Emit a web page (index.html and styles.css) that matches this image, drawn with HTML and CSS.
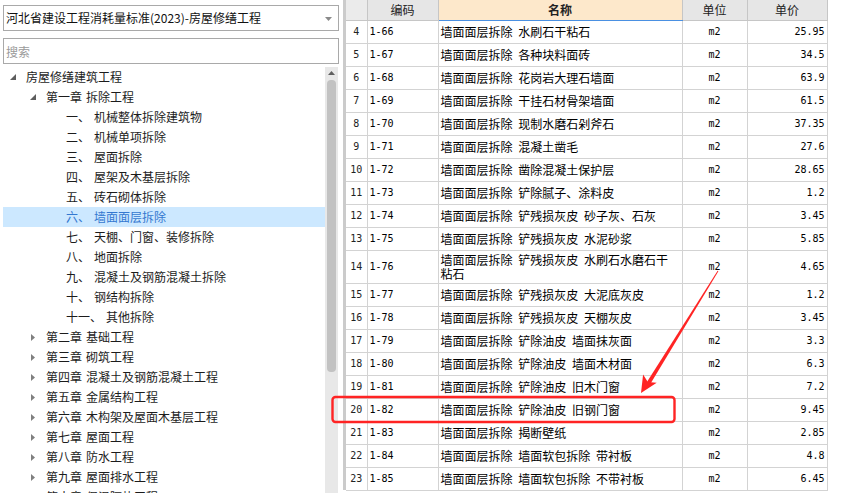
FILE: index.html
```html
<!DOCTYPE html>
<html lang="zh-CN">
<head>
<meta charset="utf-8">
<title>定额库</title>
<link rel="stylesheet" href="styles.css">
</head>
<body>
<div class="app">
  <aside class="side">
    <div class="combo">
      <span class="combo-text">河北省建设工程消耗量标准(2023)-房屋修缮工程</span>
      <svg class="combo-arrow" width="7" height="4" viewBox="0 0 7 4"><path d="M0 0H7L3.5 4Z"/></svg>
    </div>
    <div class="search"><span class="placeholder">搜索</span></div>
    <div class="tree-wrap">
      <ul class="tree">
        <li class="node l0"><span class="tog"><svg width="6" height="6" viewBox="0 0 6 6"><path d="M6 0V6H0Z"/></svg></span>房屋修缮建筑工程</li>
        <li class="node l1"><span class="tog"><svg width="6" height="6" viewBox="0 0 6 6"><path d="M6 0V6H0Z"/></svg></span><span class="ch">第一章</span>拆除工程</li>
        <li class="node l2"><span class="num">一、</span>机械整体拆除建筑物</li>
        <li class="node l2"><span class="num">二、</span>机械单项拆除</li>
        <li class="node l2"><span class="num">三、</span>屋面拆除</li>
        <li class="node l2"><span class="num">四、</span>屋架及木基层拆除</li>
        <li class="node l2"><span class="num">五、</span>砖石砌体拆除</li>
        <li class="node l2 selected"><span class="num">六、</span>墙面面层拆除</li>
        <li class="node l2"><span class="num">七、</span>天棚、门窗、装修拆除</li>
        <li class="node l2"><span class="num">八、</span>地面拆除</li>
        <li class="node l2"><span class="num">九、</span>混凝土及钢筋混凝土拆除</li>
        <li class="node l2"><span class="num">十、</span>钢结构拆除</li>
        <li class="node l2"><span class="num">十一、</span>其他拆除</li>
        <li class="node l1"><span class="tog closed"><svg width="4" height="7" viewBox="0 0 4 7"><path d="M0 0L4 3.5L0 7Z"/></svg></span><span class="ch">第二章</span>基础工程</li>
        <li class="node l1"><span class="tog closed"><svg width="4" height="7" viewBox="0 0 4 7"><path d="M0 0L4 3.5L0 7Z"/></svg></span><span class="ch">第三章</span>砌筑工程</li>
        <li class="node l1"><span class="tog closed"><svg width="4" height="7" viewBox="0 0 4 7"><path d="M0 0L4 3.5L0 7Z"/></svg></span><span class="ch">第四章</span>混凝土及钢筋混凝土工程</li>
        <li class="node l1"><span class="tog closed"><svg width="4" height="7" viewBox="0 0 4 7"><path d="M0 0L4 3.5L0 7Z"/></svg></span><span class="ch">第五章</span>金属结构工程</li>
        <li class="node l1"><span class="tog closed"><svg width="4" height="7" viewBox="0 0 4 7"><path d="M0 0L4 3.5L0 7Z"/></svg></span><span class="ch">第六章</span>木构架及屋面木基层工程</li>
        <li class="node l1"><span class="tog closed"><svg width="4" height="7" viewBox="0 0 4 7"><path d="M0 0L4 3.5L0 7Z"/></svg></span><span class="ch">第七章</span>屋面工程</li>
        <li class="node l1"><span class="tog closed"><svg width="4" height="7" viewBox="0 0 4 7"><path d="M0 0L4 3.5L0 7Z"/></svg></span><span class="ch">第八章</span>防水工程</li>
        <li class="node l1"><span class="tog closed"><svg width="4" height="7" viewBox="0 0 4 7"><path d="M0 0L4 3.5L0 7Z"/></svg></span><span class="ch">第九章</span>屋面排水工程</li>
        <li class="node l1"><span class="tog closed"><svg width="4" height="7" viewBox="0 0 4 7"><path d="M0 0L4 3.5L0 7Z"/></svg></span><span class="ch">第十章</span>保温隔热工程</li>
      </ul>
      <div class="vscroll">
        <svg class="up" width="7" height="4" viewBox="0 0 7 4"><path d="M0 4H7L3.5 0Z"/></svg>
        <div class="thumb"></div>
      </div>
    </div>
  </aside>
  <main class="grid-wrap">
    <table class="grid">
      <colgroup>
        <col class="c-no"><col class="c-code"><col class="c-name"><col class="c-unit"><col class="c-price">
      </colgroup>
      <thead>
        <tr><th class="h-no"></th><th>编码</th><th class="h-name">名称</th><th>单位</th><th>单价</th></tr>
      </thead>
      <tbody>
        <tr><td class="no">4</td><td class="code">1-66</td><td class="name">墙面面层拆除 水刷石干粘石</td><td class="unit">m2</td><td class="price">25.95</td></tr>
        <tr><td class="no">5</td><td class="code">1-67</td><td class="name">墙面面层拆除 各种块料面砖</td><td class="unit">m2</td><td class="price">34.5</td></tr>
        <tr><td class="no">6</td><td class="code">1-68</td><td class="name">墙面面层拆除 花岗岩大理石墙面</td><td class="unit">m2</td><td class="price">63.9</td></tr>
        <tr><td class="no">7</td><td class="code">1-69</td><td class="name">墙面面层拆除 干挂石材骨架墙面</td><td class="unit">m2</td><td class="price">61.5</td></tr>
        <tr><td class="no">8</td><td class="code">1-70</td><td class="name">墙面面层拆除 现制水磨石剁斧石</td><td class="unit">m2</td><td class="price">37.35</td></tr>
        <tr><td class="no">9</td><td class="code">1-71</td><td class="name">墙面面层拆除 混凝土凿毛</td><td class="unit">m2</td><td class="price">27.6</td></tr>
        <tr><td class="no">10</td><td class="code">1-72</td><td class="name">墙面面层拆除 凿除混凝土保护层</td><td class="unit">m2</td><td class="price">28.65</td></tr>
        <tr><td class="no">11</td><td class="code">1-73</td><td class="name">墙面面层拆除 铲除腻子、涂料皮</td><td class="unit">m2</td><td class="price">1.2</td></tr>
        <tr><td class="no">12</td><td class="code">1-74</td><td class="name">墙面面层拆除 铲残损灰皮 砂子灰、石灰</td><td class="unit">m2</td><td class="price">3.45</td></tr>
        <tr><td class="no">13</td><td class="code">1-75</td><td class="name">墙面面层拆除 铲残损灰皮 水泥砂浆</td><td class="unit">m2</td><td class="price">5.85</td></tr>
        <tr class="tall"><td class="no">14</td><td class="code">1-76</td><td class="name wrap">墙面面层拆除 铲残损灰皮 水刷石水磨石干<br>粘石</td><td class="unit">m2</td><td class="price">4.65</td></tr>
        <tr><td class="no">15</td><td class="code">1-77</td><td class="name">墙面面层拆除 铲残损灰皮 大泥底灰皮</td><td class="unit">m2</td><td class="price">1.2</td></tr>
        <tr><td class="no">16</td><td class="code">1-78</td><td class="name">墙面面层拆除 铲残损灰皮 天棚灰皮</td><td class="unit">m2</td><td class="price">3.45</td></tr>
        <tr><td class="no">17</td><td class="code">1-79</td><td class="name">墙面面层拆除 铲除油皮 墙面抹灰面</td><td class="unit">m2</td><td class="price">3.3</td></tr>
        <tr><td class="no">18</td><td class="code">1-80</td><td class="name">墙面面层拆除 铲除油皮 墙面木材面</td><td class="unit">m2</td><td class="price">6.3</td></tr>
        <tr><td class="no">19</td><td class="code">1-81</td><td class="name">墙面面层拆除 铲除油皮 旧木门窗</td><td class="unit">m2</td><td class="price">7.2</td></tr>
        <tr><td class="no">20</td><td class="code">1-82</td><td class="name">墙面面层拆除 铲除油皮 旧钢门窗</td><td class="unit">m2</td><td class="price">9.45</td></tr>
        <tr><td class="no">21</td><td class="code">1-83</td><td class="name">墙面面层拆除 揭断壁纸</td><td class="unit">m2</td><td class="price">2.85</td></tr>
        <tr><td class="no">22</td><td class="code">1-84</td><td class="name">墙面面层拆除 墙面软包拆除 带衬板</td><td class="unit">m2</td><td class="price">4.8</td></tr>
        <tr><td class="no">23</td><td class="code">1-85</td><td class="name">墙面面层拆除 墙面软包拆除 不带衬板</td><td class="unit">m2</td><td class="price">6.45</td></tr>
      </tbody>
    </table>
  </main>
</div>
<svg class="annot" width="867" height="493" viewBox="0 0 867 493">
  <rect x="332.5" y="397" width="342" height="25" rx="3" ry="3" fill="none" stroke="#ff2424" stroke-width="2.4"/>
  <polygon points="718.4,271.2 717.6,270.8 646.3,383 649.7,385.1" fill="#ff2424"/>
  <polygon points="641,393 643.1,374.4 647.8,381.9 656.7,382.8" fill="#ff2424"/>
</svg>
</body>
</html>
```

FILE: styles.css
```css
* { box-sizing: border-box; }

html, body {
  margin: 0;
  padding: 0;
  background: #ffffff;
}

body {
  width: 867px;
  height: 493px;
  overflow: hidden;
  position: relative;
  font-family: "Noto Sans CJK SC", "Noto Sans", sans-serif;
  font-size: 12px;
  color: #1a1a1a;
}

.app {
  display: flex;
  height: 493px;
}

/* ---------- left side ---------- */
.side {
  width: 340px;
  flex: none;
  padding: 5px 0 0 3px;
  display: flex;
  flex-direction: column;
  overflow: hidden;
}

.combo {
  width: 336px;
  height: 26px;
  border: 1px solid #a9a9a9;
  display: flex;
  align-items: center;
  padding: 0 6px 0 2px;
  justify-content: space-between;
  flex: none;
}

.combo-text {
  font-size: 12px;
  color: #111;
  line-height: 16px;
}

.combo-arrow path { fill: #8a8a8a; }
.combo-arrow { margin-top: 1px; }

.search {
  width: 336px;
  height: 26px;
  border: 1px solid #a9a9a9;
  margin-top: 7px;
  display: flex;
  align-items: center;
  padding-left: 2px;
  flex: none;
}

.placeholder {
  color: #9a9a9a;
  font-size: 12px;
}

.tree-wrap {
  margin-top: 3px;
  display: flex;
  flex: 1;
  min-height: 0;
}

.tree {
  list-style: none;
  margin: 0;
  padding: 0;
  width: 322px;
  flex: none;
  overflow: hidden;
}

.node {
  height: 20px;
  display: flex;
  align-items: center;
  white-space: nowrap;
  line-height: 20px;
  color: #1c1c1c;
}

.node.l0 { padding-left: 7px; }
.node.l1 { padding-left: 27px; }
.node.l2 { padding-left: 63px; }

.tog {
  width: 16px;
  flex: none;
  display: flex;
  align-items: center;
}

.tog svg path { fill: #5e5e5e; }
.tog.closed svg path { fill: #808080; }
.tog.closed svg { margin-left: 1px; }

.ch { margin-right: 4px; }
.num { margin-right: 4px; }

.node.selected {
  background: #cce8ff;
  color: #3478d0;
}

.vscroll {
  width: 13px;
  flex: none;
  background: #e8e8e8;
  display: flex;
  flex-direction: column;
  align-items: center;
}

.vscroll .up {
  margin-top: 4px;
}
.vscroll .up path { fill: #606060; }

.thumb {
  margin-top: 5px;
  width: 9px;
  height: 292px;
  background: #c2c2c2;
  border-radius: 4px;
}

/* ---------- grid ---------- */
.grid-wrap {
  margin-left: 3px;
  border-left: 3px solid #cbcbcb;
  height: 490px;
  flex: none;
  align-self: flex-start;
}

.grid {
  border-collapse: collapse;
  table-layout: fixed;
  width: 481px;
}

.c-no { width: 21px; }
.c-code { width: 71px; }
.c-name { width: 244px; }
.c-unit { width: 65px; }
.c-price { width: 80px; }

.grid th {
  height: 20px;
  padding: 0;
  line-height: 19px;
  font-weight: normal;
  font-size: 12px;
  color: #222;
  background: #e6e6e6;
  border-right: 1px solid #c6c6c6;
  border-bottom: 1px solid #c6c6c6;
  text-align: center;
}

.grid th.h-no { background: #ebebeb; }

.grid th.h-name {
  background: #fde8cb;
  font-weight: bold;
  border-bottom: 1px solid #4a90e2;
}

.grid td {
  height: 23px;
  padding: 0;
  line-height: 22px;
  border-right: 1px solid #d3d3d3;
  border-bottom: 1px solid #d3d3d3;
  white-space: nowrap;
  overflow: hidden;
  color: #000;
  vertical-align: middle;
}

.grid tr.tall td { height: 33px; }

.grid td.no {
  text-align: center;
  font-family: "DejaVu Sans Mono", "Liberation Mono", monospace;
  font-size: 10px;
  color: #222;
}

.grid td.code {
  padding-left: 2px;
  font-family: "DejaVu Sans Mono", "Liberation Mono", monospace;
  font-size: 10px;
}

.grid td.name {
  padding-left: 2px;
  font-size: 12px;
  word-spacing: 3px;
}

.grid td.name.wrap {
  line-height: 14px;
  padding-top: 2px;
  padding-bottom: 2px;
}

.grid td.unit {
  text-align: center;
  font-family: "DejaVu Sans Mono", "Liberation Mono", monospace;
  font-size: 10px;
}

.grid td.price {
  text-align: right;
  padding-right: 2px;
  font-family: "DejaVu Sans Mono", "Liberation Mono", monospace;
  font-size: 10px;
}

/* ---------- annotation overlay ---------- */
.annot {
  position: absolute;
  left: 0;
  top: 0;
  pointer-events: none;
}
```
